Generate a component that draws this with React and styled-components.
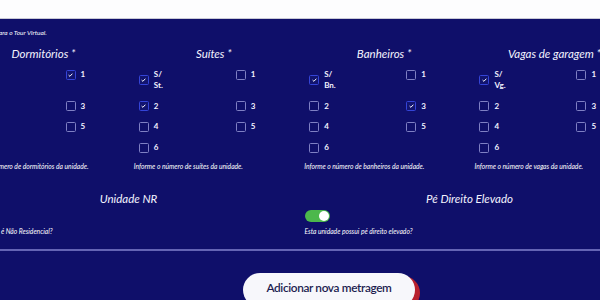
import React from "react";
import styled, { createGlobalStyle } from "styled-components";

const Global = createGlobalStyle`
  html, body { margin: 0; padding: 0; }
  body { background: #0f0f6a; font-family: Lato, "Open Sans", sans-serif; }
`;

const Page = styled.div`
  width: 600px;
  height: 300px;
  overflow: hidden;
  background: #0f0f6a;
  color: #ffffff;
`;

const TopBar = styled.div`
  height: 18px;
  background: #fdfdfe;
  border-bottom: 1px solid #c9c9d6;
`;

const Content = styled.div`
  width: 671px;
  margin-left: -36.5px;
  display: flex;
  flex-direction: column;
`;

const Note = styled.p`
  margin: 10px 0 0 0;
  font-size: 6.5px;
  line-height: 8px;
  font-style: italic;
  color: #ffffff;
`;

const FieldGrid = styled.div`
  display: grid;
  grid-template-columns: repeat(${(p) => p.cols}, ${(p) => p.colWidth}px);
  column-gap: ${(p) => p.gap}px;
  margin-top: ${(p) => p.top}px;
`;

const Field = styled.div`
  display: flex;
  flex-direction: column;
`;

const Heading = styled.h3`
  margin: 0;
  text-align: center;
  font-size: 11.5px;
  line-height: 14px;
  font-weight: 400;
  font-style: italic;
  color: #f4f4ff;
`;

const Options = styled.div`
  display: grid;
  grid-template-columns: 97px 60px;
  row-gap: 9.7px;
  align-items: start;
  padding-left: 5px;
  margin-top: 8px;
`;

const Option = styled.label`
  display: flex;
  align-items: center;
  gap: 5px;
  min-height: 11px;
`;

const Box = styled.span`
  box-sizing: border-box;
  width: 10px;
  height: 10px;
  flex: none;
  border-radius: 1.5px;
  border: 1px solid ${(p) => (p.checked ? "#3444d8" : "#7f80c4")};
  background: ${(p) => (p.checked ? "#121470" : "transparent")};
  display: flex;
  align-items: center;
  justify-content: center;
`;

const OptLabel = styled.span`
  font-size: 8px;
  line-height: 11px;
  font-weight: 700;
  color: #f2f2ff;
`;

const Helper = styled.p`
  margin: ${(p) => p.top}px 0 0 0;
  font-size: 6.7px;
  line-height: 8px;
  font-style: italic;
  color: #ffffff;
  white-space: nowrap;
`;

const Toggle = styled.span`
  margin-top: 4px;
  width: 25px;
  height: 12px;
  border-radius: 6px;
  background: ${(p) => (p.on ? "#4cb84c" : "#6b6b9e")};
  display: flex;
  align-items: center;
  justify-content: ${(p) => (p.on ? "flex-end" : "flex-start")};
  padding: 0 1px;
  box-sizing: border-box;
  &::after {
    content: "";
    width: 10px;
    height: 10px;
    border-radius: 50%;
    background: #ffffff;
  }
`;

const Divider = styled.hr`
  margin: 14px 0 0 0;
  border: none;
  height: 2px;
  background: #6464b4;
`;

const Footer = styled.div`
  display: flex;
  justify-content: center;
  padding-top: 22px;
  padding-left: 60px;
`;

const AddButton = styled.button`
  width: 172px;
  height: 34px;
  border: none;
  border-radius: 17px;
  background: #f7f7fb;
  box-shadow: 5px 3px 0 #b8212e;
  color: #1d1d50;
  font-family: Lato, "Open Sans", sans-serif;
  font-size: 11.8px;
  letter-spacing: -0.35px;
  font-weight: 600;
  padding: 0 0 4px 0;
`;

const Check = () => (
  <svg width="5" height="4" viewBox="0 0 5 4">
    <path d="M0.6 2.1 L1.9 3.3 L4.4 0.7" fill="none" stroke="#ffffff" strokeWidth="1" />
  </svg>
);

const fields = [
  { title: "Dormitórios *", none: "S/\nSt.", help: "Informe o número de dormitórios da unidade.", checked: ["1"] },
  { title: "Suítes *", none: "S/\nSt.", help: "Informe o número de suítes da unidade.", checked: ["S/", "2"] },
  { title: "Banheiros *", none: "S/\nBn.", help: "Informe o número de banheiros da unidade.", checked: ["S/", "3"] },
  { title: "Vagas de garagem *", none: "S/\nVg.", help: "Informe o número de vagas da unidade.", checked: ["S/"] },
];

function OptionItem({ label, checked }) {
  return (
    <Option>
      <Box checked={checked}>{checked && <Check />}</Box>
      <OptLabel>
        {label.split("\n").map((l, i) => (
          <React.Fragment key={i}>
            {i > 0 && <br />}
            {l}
          </React.Fragment>
        ))}
      </OptLabel>
    </Option>
  );
}

const opts = ["S/", "1", "2", "3", "4", "5", "6"];

export default function App() {
  return (
    <Page>
      <Global />
      <TopBar />
      <Content>
        <Note>Insira o link para o Tour Virtual.</Note>
        <FieldGrid cols={4} colWidth={160} gap={10.33} top={10}>
          {fields.map((f) => (
            <Field key={f.title}>
              <Heading>{f.title}</Heading>
              <Options>
                {opts.map((v) => (
                  <OptionItem key={v} label={v === "S/" ? f.none : v} checked={f.checked.includes(v)} />
                ))}
              </Options>
              <Helper top={8.5}>{f.help}</Helper>
            </Field>
          ))}
        </FieldGrid>
        <FieldGrid cols={2} colWidth={330} gap={11} top={22}>
          <Field>
            <Heading>Unidade NR</Heading>
            <Toggle on={false} />
            <Helper top={5}>Esta unidade é Não Residencial?</Helper>
          </Field>
          <Field>
            <Heading>Pé Direito Elevado</Heading>
            <Toggle on />
            <Helper top={5}>Esta unidade possui pé direito elevado?</Helper>
          </Field>
        </FieldGrid>
        <Divider />
        <Footer>
          <AddButton>Adicionar nova metragem</AddButton>
        </Footer>
      </Content>
    </Page>
  );
}
